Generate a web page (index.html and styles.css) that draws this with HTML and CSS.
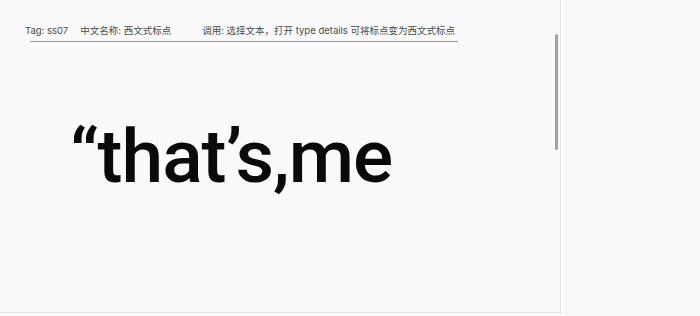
FILE: index.html
```html
<!DOCTYPE html>
<html>
<head>
<meta charset="utf-8">
<link rel="stylesheet" href="styles.css">
</head>
<body>
<div class="app">
  <main class="panel">
    <div class="content">
      <div class="meta">
        <span class="tag">Tag: ss07</span>
        <span class="name">中文名称: 西文式标点</span>
        <span class="usage">调用: 选择文本，打开 type details 可将标点变为西文式标点</span>
      </div>
      <div class="rule"></div>
      <div class="sample">“that’s,me</div>
    </div>
    <div class="scrollbar"><div class="thumb"></div></div>
  </main>
  <div class="gutter"></div>
  <aside class="side"></aside>
</div>
</body>
</html>
```
FILE: styles.css
```css
html, body { margin: 0; padding: 0; }
body {
  width: 700px;
  height: 316px;
  overflow: hidden;
  background: #fafafa;
  font-family: Inter, "Noto Sans CJK SC", sans-serif;
}
.app {
  display: flex;
  height: 316px;
}
.panel {
  width: 560px;
  height: 312px;
  display: flex;
  border-bottom: 1px solid #e4e4e4;
  border-right: 1px solid #e4e4e4;
  background: #fafafa;
}
.content {
  flex: 1;
  padding: 24px 0 0 25px;
  white-space: nowrap;
}
.meta {
  display: flex;
  align-items: baseline;
  font-size: 9.5px;
  line-height: 13px;
  color: #4a4a4a;
  padding-bottom: 4px;
}
.tag { margin-right: 12px; }
.name { margin-right: 31px; }
.rule {
  margin-left: 5px;
  width: 428px;
  height: 1px;
  background: #9a9a9a;
}
.sample {
  margin: 77px 0 0 45px;
  font-family: Roboto, sans-serif;
  font-size: 75px;
  line-height: 1;
  color: #0a0a0a;
  font-weight: 500;
  letter-spacing: -1px;
}
.scrollbar {
  width: 8px;
  padding-top: 34px;
  display: flex;
  justify-content: center;
}
.thumb {
  width: 3px;
  height: 116px;
  background: #a3a3a3;
  border-radius: 2px;
}
.gutter {
  width: 5px;
  border-right: 1px solid #ececec;
  height: 316px;
}
.side { flex: 1; background: #fafafa; }
```
